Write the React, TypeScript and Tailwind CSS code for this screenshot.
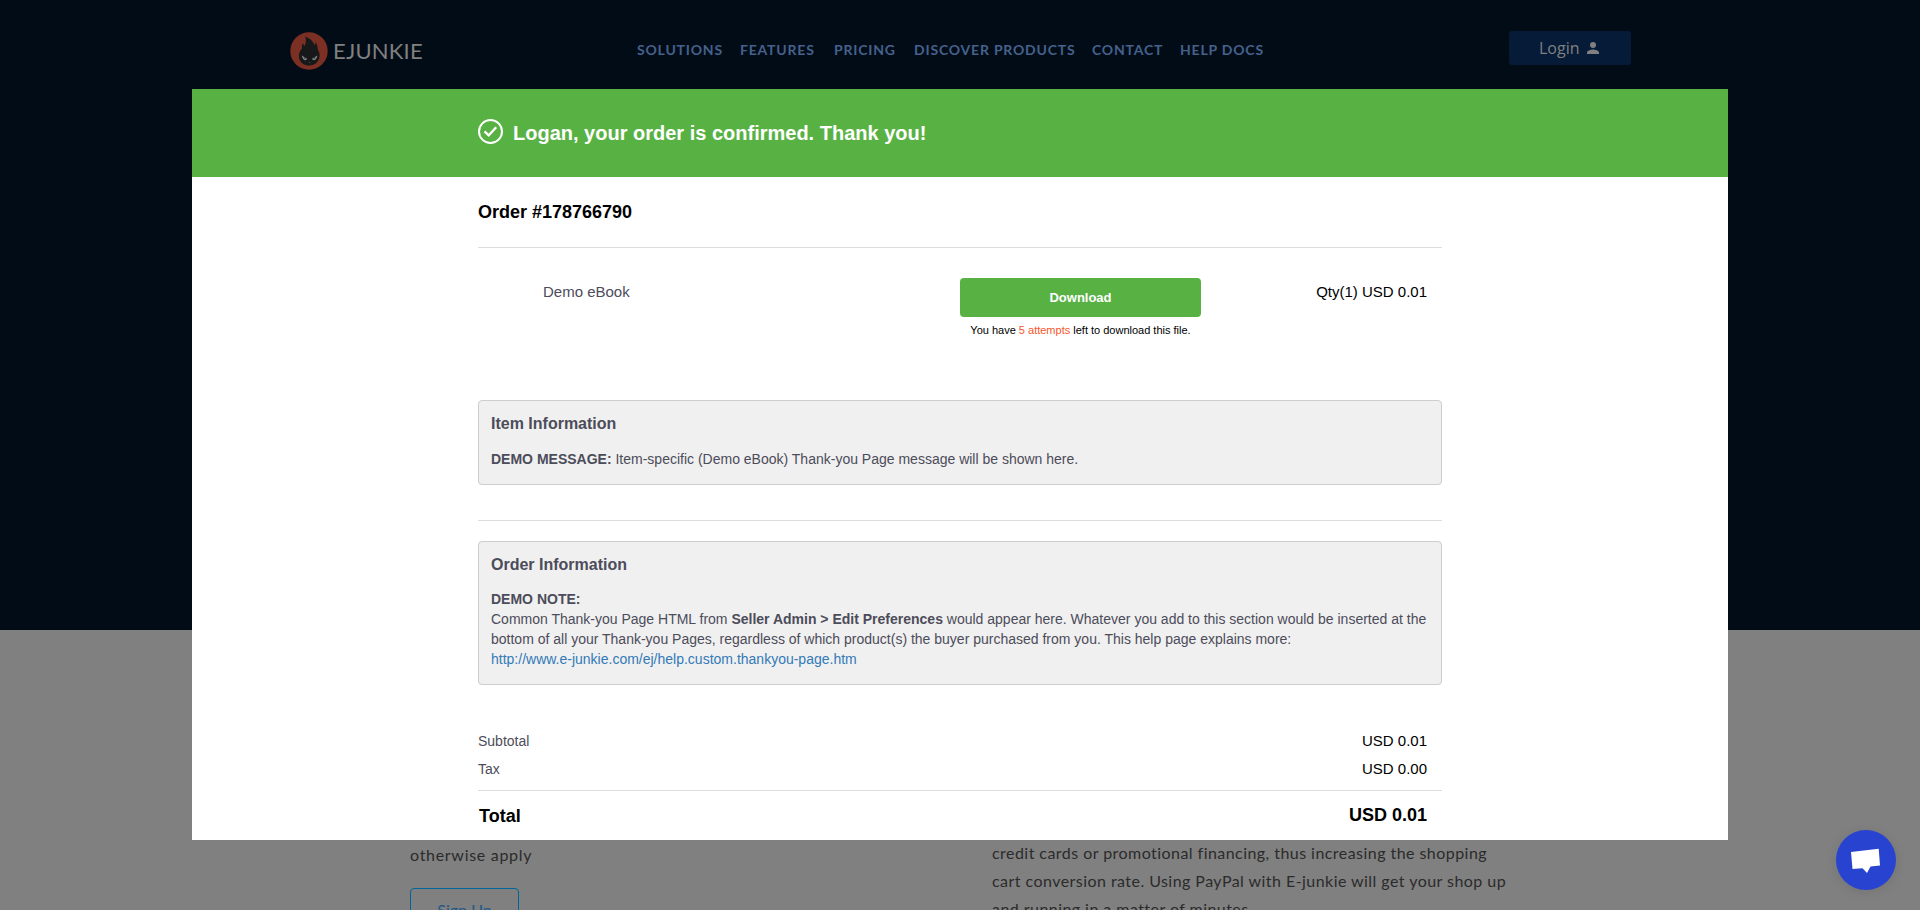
const NAV = [
  { label: "SOLUTIONS", width: "w-[103px]" },
  { label: "FEATURES", width: "w-[94px]" },
  { label: "PRICING", width: "w-[80px]" },
  { label: "DISCOVER PRODUCTS", width: "w-[178px]" },
  { label: "CONTACT", width: "w-[88px]" },
  { label: "HELP DOCS", width: "w-[90px]" },
];

function LogoMark() {
  return (
    <svg width="38" height="38" viewBox="0 0 38 38" aria-hidden="true">
      <circle cx="19" cy="19" r="18.7" fill="#7c3023" />
      <path
        d="M15.2 4.5C19.5 6 23 9 24.6 13.2c.8-1 1-2.200.8-3.700 1.800 3.200 2.300 5.600 2.400 8 1.700 2.500 2.200 5.300 1.500 8.300C28 30.800 24.200 33.500 19.300 33.500c-5.300 0-9.500-3.200-10.300-8.100-.6-3.900 1-6.600 3-9-.3-1.700-.1-3.600 1-5.400.2 1.300.7 2.300 1.500 3.100 1.700-3 1.900-6.200.7-9.600z"
        fill="#171819"
      />
      <path d="M11.800 23.500l5.400 3.300c-.8 2.300-4.700 2-5.400-3.300zM27.400 23.500L22 26.800c.8 2.300 4.700 2 5.400-3.300z" fill="#858585" />
      <path d="M13.800 25l1.800 1.100-.6 1.200zM25.400 25l-1.800 1.100.6 1.200z" fill="#171819" />
      <path d="M18.700 30.300h1.800l-.9.700z" fill="#6b6b6b" />
    </svg>
  );
}

function Header() {
  return (
    <header className="flex h-[630px] items-start bg-[#020c17] pl-[290px] font-['Lato',sans-serif]">
      <div className="flex w-[347px] items-center pt-[32px]">
        <LogoMark />
        <span className="pl-[5px] text-[22px] leading-[38px] tracking-[0.2px] text-[#808080]">EJUNKIE</span>
      </div>
      <nav className="flex w-[872px] pt-[40px] text-[14px] font-bold leading-5 tracking-[0.8px] text-[#45618c]">
        {NAV.map((item) => (
          <a key={item.label} className={`shrink-0 whitespace-nowrap ${item.width}`}>
            {item.label}
          </a>
        ))}
      </nav>
      <button className="mt-[31px] flex h-[34px] w-[122px] items-center rounded-[3px] bg-[#061b38] pl-[30px] font-['Open_Sans',sans-serif] text-[16px] leading-6 text-[#808080]">
        <span className="w-[48px] text-left">Login</span>
        <svg width="12" height="12" viewBox="0 0 12 12" fill="currentColor" aria-hidden="true">
          <circle cx="6" cy="3" r="3" />
          <path d="M0 12v-1.500C0 8.500 4 7.500 6 7.500s6 1 6 3V12z" />
        </svg>
      </button>
    </header>
  );
}

function PageBody() {
  return (
    <div className="flex h-[280px] items-start bg-[#808080] pl-[410px] font-['Lato',sans-serif] text-[16px] leading-7 text-[#2b2b2b]">
      <div className="w-[582px] pt-[211px]">
        <p className="tracking-[0.7px]">otherwise apply</p>
        <button className="mt-[19px] h-[44px] w-[109px] rounded border border-[#00659a] text-[16px] text-[#21598a]">Sign Up</button>
      </div>
      <div className="whitespace-nowrap pt-[209px]">
        <p className="tracking-[0.45px]">credit cards or promotional financing, thus increasing the shopping</p>
        <p className="tracking-[0.45px]">cart conversion rate. Using PayPal with E-junkie will get your shop up</p>
        <p className="tracking-[0.45px]">and running in a matter of minutes.</p>
      </div>
    </div>
  );
}

function OrderDialog() {
  return (
    <section className="absolute left-[192px] top-[89px] h-[751px] w-[1536px] bg-white font-['Liberation_Sans',Arial,sans-serif] text-[14px] leading-5 text-[#4c4c5a]">
      <div className="flex h-[88px] items-start bg-[#58b243] pl-[286px] pt-[30px] text-white">
        <svg width="25" height="25" viewBox="0 0 25 25" fill="none" stroke="currentColor" aria-hidden="true">
          <circle cx="12.500" cy="12.500" r="11.500" strokeWidth="2" />
          <path d="M6.500 12.300l4.200 4 7.500-8" strokeWidth="2.400" />
        </svg>
        <h1 className="pl-[10px] pt-[1px] text-[20px] font-bold leading-[26px]">Logan, your order is confirmed. Thank you!</h1>
      </div>
      <div className="mx-auto w-[964px]">
        <h2 className="h-[70px] pt-[23px] text-[18px] font-bold leading-6 text-black">Order #178766790</h2>
        <hr className="border-[#dcdcdc]" />
        <div className="flex h-[152px] items-start pt-[30px]">
          <div className="w-[482px] pl-[65px] pt-[4px] text-[15px]">Demo eBook</div>
          <div className="w-[241px] text-center">
            <button className="h-[39px] w-full rounded bg-[#58b243] text-[13px] font-bold text-white">Download</button>
            <p className="mt-[3px] text-[11px] leading-5 text-black">
              You have <span className="text-[#f8562b]">5 attempts</span> left to download this file.
            </p>
          </div>
          <div className="flex-1 pr-[15px] pt-[4px] text-right text-[15px] text-black">Qty(1) USD 0.01</div>
        </div>
        <div className="h-[85px] rounded border border-[#cdcdd0] bg-[#f0f0f0] px-3 pt-[13px]">
          <h3 className="text-[16px] font-bold leading-5">Item Information</h3>
          <p className="mt-[15px]">
            <b>DEMO MESSAGE:</b> Item-specific (Demo eBook) Thank-you Page message will be shown here.
          </p>
        </div>
        <hr className="mb-5 mt-[35px] border-[#dcdcdc]" />
        <div className="h-[144px] rounded border border-[#cdcdd0] bg-[#f0f0f0] px-3 pt-[13px]">
          <h3 className="text-[16px] font-bold leading-5">Order Information</h3>
          <p className="mt-[14px] whitespace-nowrap">
            <b>DEMO NOTE:</b>
            <br />
            Common Thank-you Page HTML from <b>Seller Admin &gt; Edit Preferences</b> would appear here. Whatever you add to this section would be inserted at the
            <br />
            bottom of all your Thank-you Pages, regardless of which product(s) the buyer purchased from you. This help page explains more:
            <br />
            <a className="text-[#337ab7]">http://www.e-junkie.com/ej/help.custom.thankyou-page.htm</a>
          </p>
        </div>
        <div className="mt-[46px] flex h-7 justify-between pr-[15px]">
          <span>Subtotal</span>
          <span className="text-[15px] text-black">USD 0.01</span>
        </div>
        <div className="flex h-[31px] justify-between pr-[15px]">
          <span>Tax</span>
          <span className="text-[15px] text-black">USD 0.00</span>
        </div>
        <hr className="border-[#dcdcdc]" />
        <div className="flex justify-between pl-px pr-[15px] pt-[12px] text-[18px] font-bold leading-6 text-black">
          <span className="pt-[1px]">Total</span>
          <span>USD 0.01</span>
        </div>
      </div>
    </section>
  );
}

function ChatButton() {
  return (
    <button className="absolute left-[1836px] top-[830px] size-[60px] rounded-full bg-[#2843d0] shadow-[0_2px_12px_rgba(0,0,0,0.1)]" aria-label="Chat">
      <svg width="60" height="60" viewBox="0 0 60 60" aria-hidden="true">
        <path d="M15 22L42.700 18.800 44 35.600 34.500 36.500 31 43 26.500 38.200 16.500 39z" fill="#fff" />
      </svg>
    </button>
  );
}

export default function App() {
  return (
    <main className="relative h-[910px] w-[1920px] overflow-hidden bg-[#808080]">
      <Header />
      <PageBody />
      <OrderDialog />
      <ChatButton />
    </main>
  );
}
